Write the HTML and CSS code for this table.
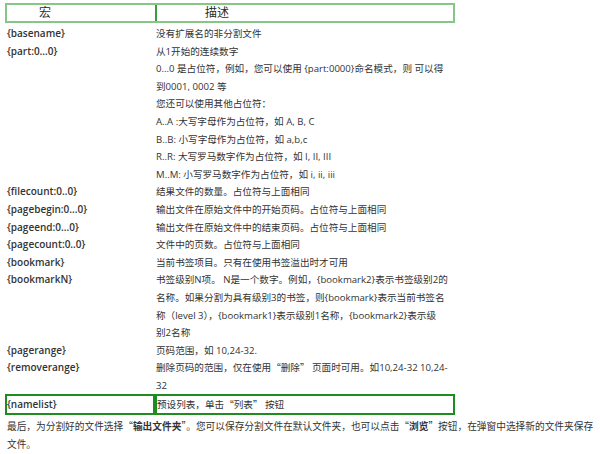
FILE: index.html
```html
<!DOCTYPE html>
<html lang="zh-CN">
<head>
<meta charset="utf-8">
<title>宏</title>
<link rel="stylesheet" href="styles.css">
</head>
<body>
<div class="macros">
  <div class="head">
    <div class="hc hc-l">宏</div>
    <div class="hc hc-r">描述</div>
  </div>
  <div class="row row-first"><div class="k">{basename}</div><div class="v">没有扩展名的非分割文件</div></div>
  <div class="row"><div class="k">{part:0...0}</div><div class="v">从1开始的连续数字<br>0...0 是占位符，例如，您可以使用 {part:0000}命名模式，则 可以得<br>到0001, 0002 等<br>您还可以使用其他占位符：<br>A..A :大写字母作为占位符，如 A, B, C<br>B..B: 小写字母作为占位符，如 a,b,c<br>R..R: 大写罗马数字作为占位符，如 I, II, III<br>M..M: 小写罗马数字作为占位符，如 i, ii, iii</div></div>
  <div class="row"><div class="k">{filecount:0..0}</div><div class="v">结果文件的数量。占位符与上面相同</div></div>
  <div class="row"><div class="k">{pagebegin:0...0}</div><div class="v">输出文件在原始文件中的开始页码。占位符与上面相同</div></div>
  <div class="row"><div class="k">{pageend:0...0}</div><div class="v">输出文件在原始文件中的结束页码。占位符与上面相同</div></div>
  <div class="row"><div class="k">{pagecount:0..0}</div><div class="v">文件中的页数。占位符与上面相同</div></div>
  <div class="row"><div class="k">{bookmark}</div><div class="v">当前书签项目。只有在使用书签溢出时才可用</div></div>
  <div class="row"><div class="k">{bookmarkN}</div><div class="v">书签级别N项。 N是一个数字。例如，{bookmark2}表示书签级别2的<br>名称。如果分割为具有级别3的书签，则{bookmark}表示当前书签名<br>称（level 3），{bookmark1}表示级别1名称，{bookmark2}表示级<br>别2名称</div></div>
  <div class="row"><div class="k">{pagerange}</div><div class="v">页码范围，如 10,24-32.</div></div>
  <div class="row"><div class="k">{removerange}</div><div class="v">删除页码的范围，仅在使用<span class="cq">“</span>删除<span class="cq">”</span> 页面时可用。如10,24-32 10,24-<br>32</div></div>
  <div class="last">
    <div class="lc lc-l">{namelist}</div>
    <div class="lc lc-r">预设列表，单击<span class="cq">“</span>列表<span class="cq">”</span> 按钮</div>
  </div>
</div>
<p class="foot">最后，为分割好的文件选择<span class="cq">“</span><b>输出文件夹</b><span class="cq">”</span>。您可以保存分割文件在默认文件夹，也可以点击<span class="cq">“</span><b>浏览</b><span class="cq">”</span>按钮，在弹窗中选择新的文件夹保存<br>文件。</p>
</body>
</html>
```
FILE: styles.css
```css
html, body {
  margin: 0;
  padding: 0;
  background: #ffffff;
}
body {
  font-family: "Open Sans", "Noto Sans CJK SC", sans-serif;
  font-size: 9.6px;
  color: #333333;
}
.cq {
  font-family: "Noto Sans CJK SC", sans-serif;
}
.macros {
  margin: 3px 0 0 5px;
  width: 450px;
}
.head {
  display: grid;
  grid-template-columns: 148px 1fr;
  border: 2px solid #86c686;
  height: 16px;
}
.hc {
  font-size: 12px;
  line-height: 16px;
  white-space: nowrap;
  color: #2a2a2a;
}
.hc-l {
  padding-left: 32px;
}
.hc-r {
  border-left: 2px solid #3c9c3c;
  padding-left: 48px;
}
.row {
  display: grid;
  grid-template-columns: 151px 1fr;
  line-height: 17.6px;
}
.row-first {
  padding-top: 2px;
}
.k {
  padding-left: 2px;
  font-size: 10px;
  font-weight: 600;
  white-space: nowrap;
}
.v {
  white-space: nowrap;
}
.last {
  display: grid;
  grid-template-columns: 150px 300px;
  height: 20px;
}
.lc {
  border: 2px solid #1e8c1e;
  line-height: 16px;
  white-space: nowrap;
}
.lc-l {
  font-size: 10px;
  font-weight: 600;
}
.foot {
  margin: 3px 0 0 7px;
  font-size: 9.7px;
  line-height: 18px;
  white-space: nowrap;
}
.foot b {
  font-weight: 700;
}
```
